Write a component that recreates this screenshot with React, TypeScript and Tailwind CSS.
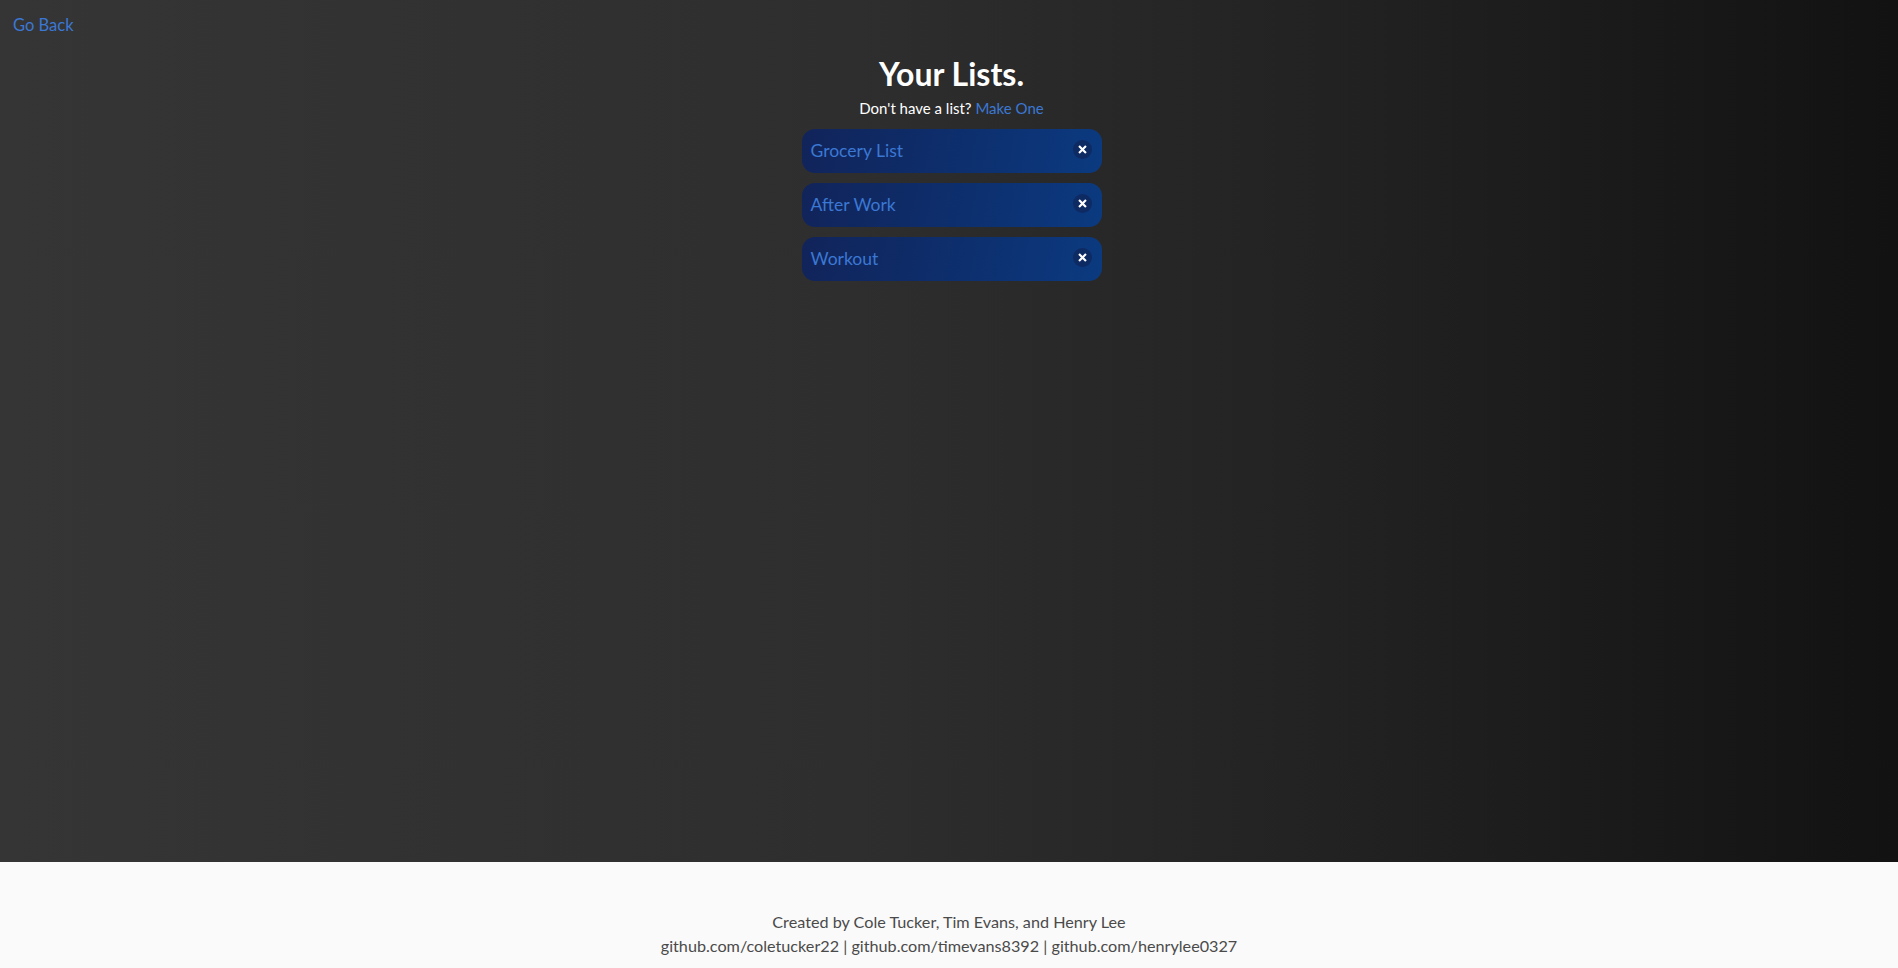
import React from 'react';

const lists = ['Grocery List', 'After Work', 'Workout'];

const App: React.FC = () => {
  return (
    <div className="flex h-screen flex-col font-['Lato','Noto_Sans',sans-serif]">
      <main className="relative flex-1 bg-[linear-gradient(to_right,#353535_0%,#2e2e2e_45%,#222222_70%,#121212_100%)]">
        <a className="absolute left-[13px] top-[13px] text-[16.5px] text-[#3b78d4]">Go Back</a>
        <div className="flex flex-col items-center pl-[5px] pt-[54px]">
          <h1 className="text-[32px] font-bold leading-[40px] text-white">Your Lists.</h1>
          <p className="mt-[4px] text-[15px] leading-[20px] text-white">
            Don't have a list? <a className="text-[#3b78d4]">Make One</a>
          </p>
          <div className="mt-[11px] flex w-[300px] flex-col gap-[10px]">
            {lists.map(name => (
              <div
                key={name}
                className="flex h-[44px] items-center justify-between rounded-[13px] bg-[linear-gradient(100deg,#11245a_0%,#0d2f6e_55%,#0b3a80_100%)] pl-[9px] pr-[10px]"
              >
                <span className="text-[17.5px] text-[#3b78d4]">{name}</span>
                <span className="mb-[3px] flex h-[19px] w-[19px] items-center justify-center rounded-full bg-[#0e2a63] text-white">
                  <svg width="9" height="9" viewBox="0 0 10 10" fill="none" stroke="currentColor" strokeWidth="2.4" strokeLinecap="square">
                    <path d="M2 2 L8 8 M8 2 L2 8" />
                  </svg>
                </span>
              </div>
            ))}
          </div>
        </div>
      </main>
      <footer className="flex h-[106px] flex-col items-center bg-[#fafafa] pt-[48px] text-[16.2px] leading-[24px] text-[#4a4a4a]">
        <p>Created by Cole Tucker, Tim Evans, and Henry Lee</p>
        <p>github.com/coletucker22 | github.com/timevans8392 | github.com/henrylee0327</p>
      </footer>
    </div>
  );
};

export default App;
